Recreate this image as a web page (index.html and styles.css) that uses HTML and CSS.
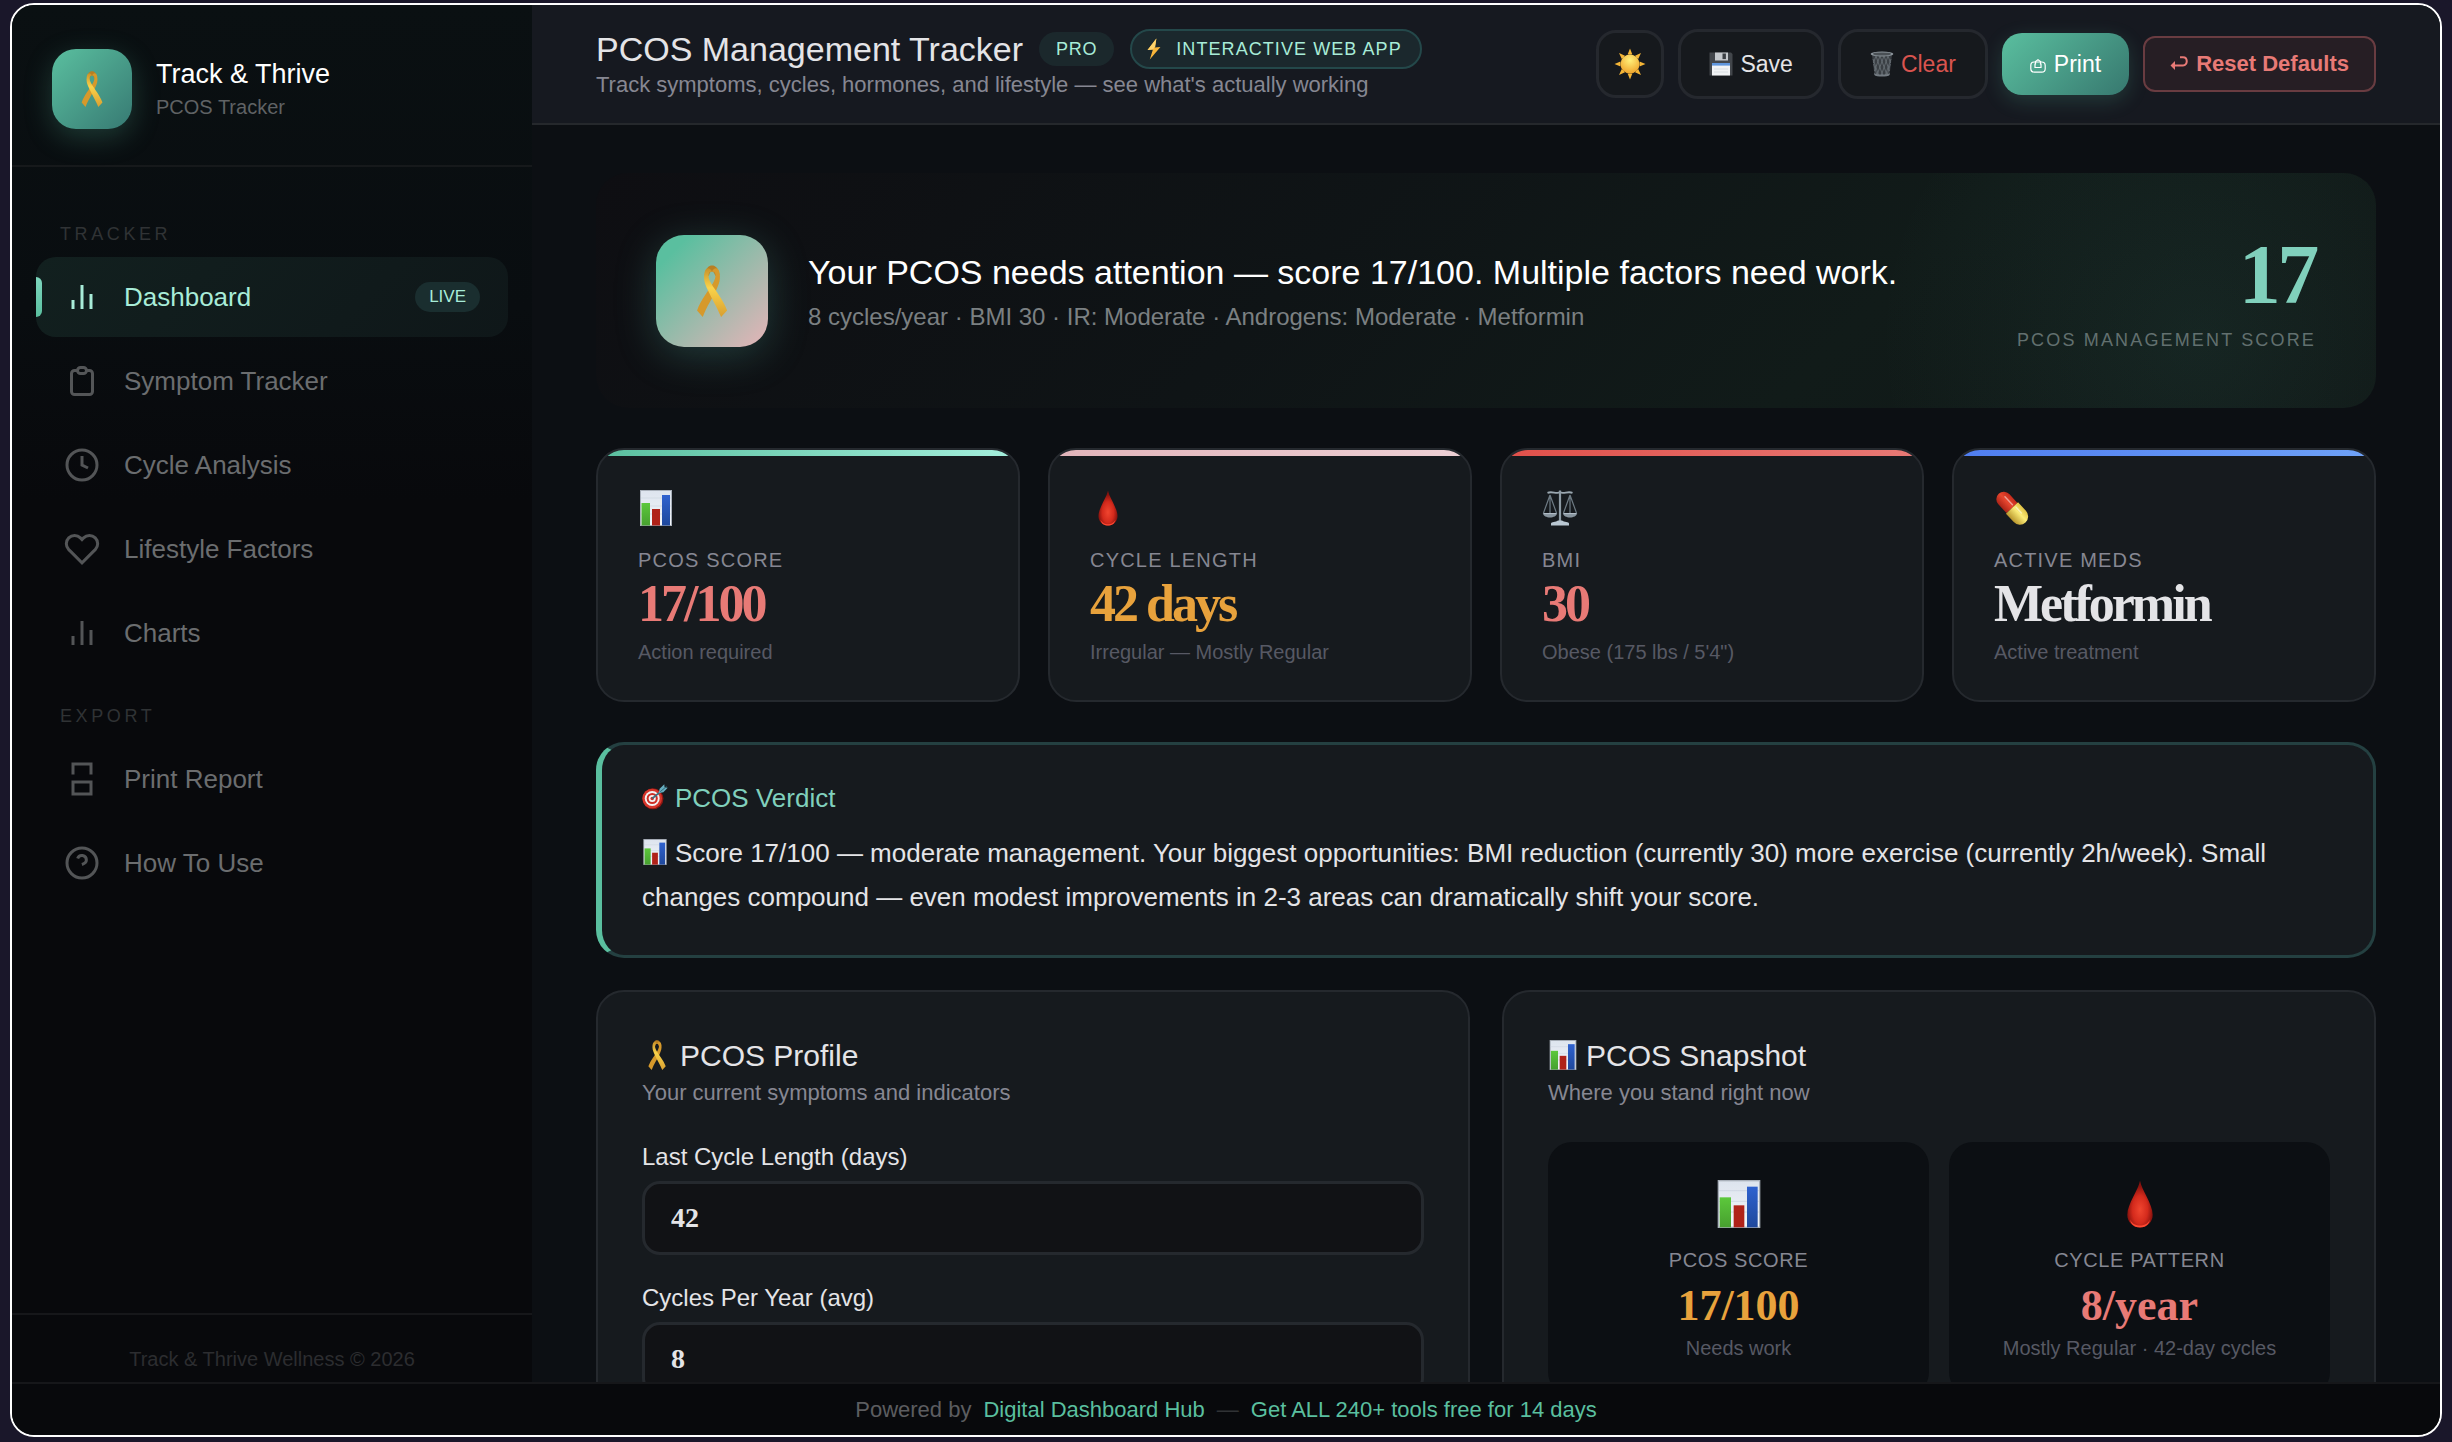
FILE: index.html
```html
<!DOCTYPE html>
<html lang="en">
<head>
  <meta charset="UTF-8" />
  <meta name="viewport" content="width=device-width, initial-scale=1.0" />
  <title>PCOS Management Tracker</title>
  <link rel="stylesheet" href="styles.css">
</head>
<body>

<!-- Shared picture icons -->
<svg class="sprite" aria-hidden="true">
  <defs>
    <linearGradient id="gold" x1="0" y1="0" x2="0" y2="1">
      <stop offset="0" stop-color="#c8922a" />
      <stop offset="0.4" stop-color="#fad34a" />
      <stop offset="1" stop-color="#d89f30" />
    </linearGradient>
    <linearGradient id="paper" x1="0" y1="0" x2="0" y2="1">
      <stop offset="0" stop-color="#dde4ee" />
      <stop offset="1" stop-color="#f2f5f9" />
    </linearGradient>
    <linearGradient id="green" x1="0" y1="0" x2="0" y2="1">
      <stop offset="0" stop-color="#5cc83c" />
      <stop offset="1" stop-color="#47a02f" />
    </linearGradient>
    <linearGradient id="blue" x1="0" y1="0" x2="0" y2="1">
      <stop offset="0" stop-color="#2f62cf" />
      <stop offset="1" stop-color="#1f489c" />
    </linearGradient>
    <radialGradient id="blood" cx="0.5" cy="0.62" r="0.5">
      <stop offset="0" stop-color="#f0452f" />
      <stop offset="0.6" stop-color="#d42a1c" />
      <stop offset="1" stop-color="#8a130e" />
    </radialGradient>
    <radialGradient id="sunfill" cx="0.5" cy="0.3" r="0.7">
      <stop offset="0" stop-color="#fff07a" />
      <stop offset="1" stop-color="#f0a52c" />
    </radialGradient>
    <linearGradient id="steel" x1="0" y1="0" x2="0" y2="1">
      <stop offset="0" stop-color="#5d6a72" />
      <stop offset="0.6" stop-color="#8d9ba5" />
      <stop offset="1" stop-color="#c3d0da" />
    </linearGradient>
    <linearGradient id="pillred" x1="0" y1="0" x2="1" y2="0">
      <stop offset="0" stop-color="#a92317" />
      <stop offset="0.55" stop-color="#e8472f" />
      <stop offset="1" stop-color="#c52c1c" />
    </linearGradient>
    <linearGradient id="pillyellow" x1="0" y1="0" x2="1" y2="0">
      <stop offset="0" stop-color="#b9962c" />
      <stop offset="0.6" stop-color="#fbec78" />
      <stop offset="1" stop-color="#e0c245" />
    </linearGradient>

    <symbol id="i-ribbon" viewBox="0 0 20 32">
      <path d="M5.5 6 C6.5 1.5 8 0.3 10 0.3 C12.2 0.3 13.8 1.8 14.6 6 L12 6.6 C11.4 4.6 10.8 4 10 4 C9 4 8.5 4.6 8.1 6.6 Z" fill="#b97f22" />
      <path d="M14.6 4.6 C15.4 8.6 14.4 11.6 12.6 15.4 C10 21 7 25 4.3 32 L0.8 28 C3.4 21 7.6 16.4 10.4 11.6 C11.8 9.2 12.4 7.4 12 5.4 C11.7 4.4 11 4 10 4 C11.6 1.2 13.8 1.4 14.6 4.6 Z" fill="#d6992b" />
      <path d="M5.4 4.6 C4.6 8.6 5.6 11.6 7.4 15.4 C10 21 12.6 25 15.6 32 L19.3 28 C16.6 21 12.4 16.4 9.6 11.6 C8.2 9.2 7.6 7.4 8 5.4 C8.3 4.4 9 4 10 4 C8.4 1.2 6.2 1.4 5.4 4.6 Z" fill="url(#gold)" />
    </symbol>

    <symbol id="i-chart" viewBox="0 0 32 36">
      <rect x="0.5" y="0.5" width="31" height="35" fill="url(#paper)" stroke="#a9b0ba" />
      <path d="M1 8h30M1 16h30M1 24h30" stroke="#cbd3df" stroke-width="0.6" />
      <rect x="1.5" y="13" width="8.5" height="22.5" fill="url(#green)" />
      <rect x="12" y="19" width="8" height="16.5" fill="#b02219" />
      <rect x="22" y="5" width="8" height="30.5" fill="url(#blue)" />
    </symbol>

    <symbol id="i-drop" viewBox="0 0 22 36">
      <path d="M11 0.5 C12 7 20.5 18 20.5 26 C20.5 31.5 16.4 35.5 11 35.5 C5.6 35.5 1.5 31.5 1.5 26 C1.5 18 10 7 11 0.5 Z" fill="url(#blood)" />
      <path d="M3.4 29.5 C5.2 33.2 8 34.2 11 34.2 C14 34.2 16.8 33.2 18.6 29.5 C17.6 34 14.8 35.6 11 35.6 C7.2 35.6 4.4 34 3.4 29.5 Z" fill="#ff4a33" />
    </symbol>

    <symbol id="i-scales" viewBox="0 0 36 36">
      <g fill="none" stroke="url(#steel)" stroke-width="1.2">
        <path d="M8 5 L1.5 23 M8 5 L8 23 M8 5 L14.5 23 M28 5 L21.5 23 M28 5 L28 23 M28 5 L34.5 23" stroke="#6d7a83" />
        <path d="M5.5 2.8 C10 1 14 4 18 2.4 C22 4 26 1 30.5 2.8" stroke="#9aa7b0" stroke-width="1.8" />
      </g>
      <rect x="16.9" y="0.5" width="2.2" height="31" fill="#8e9ba5" />
      <path d="M0.8 23 H15.2 C14.4 29 1.6 29 0.8 23 Z M20.8 23 H35.2 C34.4 29 21.6 29 20.8 23 Z" fill="#87949e" />
      <path d="M2 23.6 H14 M22 23.6 H34" stroke="#c2ccd4" stroke-width="0.8" />
      <path d="M9 35.5 V33.5 C9 32 14 32 16 30.5 H20 C22 32 27 32 27 33.5 V35.5 Z" fill="#b9c7d2" />
    </symbol>

    <symbol id="i-pill" viewBox="0 0 36 36">
      <g transform="rotate(-43 18 18)">
        <path d="M10.5 18 V6 A7.5 7.5 0 0 1 25.5 6 V18 Z" fill="url(#pillred)" />
        <path d="M9.7 18 H26.3 V29.5 A8.3 8.3 0 0 1 9.7 29.5 Z" fill="url(#pillyellow)" />
        <path d="M20.5 5 V16 M21.5 20 V28" stroke="#fff" stroke-width="1.4" stroke-linecap="round" opacity="0.5" />
      </g>
    </symbol>

    <symbol id="i-target" viewBox="0 0 28 28">
      <circle cx="11.8" cy="16" r="11.3" fill="#8e1712" />
      <circle cx="11" cy="15.6" r="10.6" fill="#d6362b" />
      <circle cx="11" cy="15.6" r="8" fill="#f3f3f3" />
      <circle cx="11" cy="15.6" r="6" fill="#cf2f26" />
      <circle cx="11" cy="15.6" r="3.8" fill="#f3f3f3" />
      <circle cx="11" cy="15.6" r="1.9" fill="#cf2f26" />
      <path d="M11 15.6 L22 6.5" stroke="#3d6f80" stroke-width="1.8" />
      <path d="M18 9.8 L19 5 L24 0.4 L24.3 3.6 L27.7 4 L23 8.8 Z" fill="#66aec0" />
      <path d="M19.6 8.3 L26.5 2.6" stroke="#2f6475" stroke-width="1" />
    </symbol>

    <symbol id="i-bolt" viewBox="0 0 20 24">
      <path d="M12.6 0.5 L3 13.2 L8.8 12.6 L5.4 23.5 L17 9.8 L10.8 10.4 Z" fill="#f7b53a" />
      <path d="M12.6 0.5 L3 13.2 L8.8 12.6 L11.4 9 Z" fill="#ffd36b" />
    </symbol>

    <symbol id="i-sun" viewBox="0 0 32 32">
      <path d="M16 0.5 L18.4 6.5 H13.6 Z M16 31.5 L13.6 25.5 H18.4 Z M0.5 16 L6.5 13.6 V18.4 Z M31.5 16 L25.5 18.4 V13.6 Z M5 5 L11 7.8 L7.8 11 Z M27 5 L24.2 11 L21 7.8 Z M5 27 L7.8 21 L11 24.2 Z M27 27 L21 24.2 L24.2 21 Z" fill="#f5b536" />
      <circle cx="16" cy="16" r="9.5" fill="url(#sunfill)" />
    </symbol>

    <symbol id="i-floppy" viewBox="0 0 24 24">
      <path d="M0.5 0.5 H22 L23.5 2 V23.5 H0.5 Z" fill="#42464b" />
      <rect x="6" y="0.5" width="13" height="8" fill="#c4c8cc" />
      <rect x="13.5" y="1.5" width="3.4" height="5.6" fill="#3a3e43" />
      <rect x="3" y="11" width="18" height="12.5" fill="#f1f3f5" />
      <rect x="3" y="11" width="18" height="2.6" fill="#5f96dd" />
      <path d="M5 17h14M5 20h14" stroke="#d3d7dc" stroke-width="0.8" />
    </symbol>

    <symbol id="i-trash" viewBox="0 0 24 26">
      <path d="M2 4 H22 L19.6 23.4 C19.4 25.6 4.6 25.6 4.4 23.4 Z" fill="#3a3f44" />
      <path d="M3 8 L9 25 M3.6 13 L7 24 M6 5 L13 25 M10 5 L17 24 M14 5 L19.6 20 M18 5 L20.6 12 M21 8 L15 25 M20.4 13 L17 24 M18 5 L11 25 M14 5 L7 24 M10 5 L4.4 20 M6 5 L3.4 12" stroke="#7b8389" stroke-width="0.6" />
      <ellipse cx="12" cy="3" rx="11.4" ry="2.6" fill="#8c959c" />
      <ellipse cx="12" cy="3" rx="9.2" ry="1.6" fill="#4a5055" />
      <path d="M4.2 22 C6 24 18 24 19.8 22 L19.6 24 C18 26 6 26 4.4 24 Z" fill="#737b82" />
    </symbol>
  </defs>
</svg>

<div class="app">
  <div class="layout">

    <aside class="sidebar">
      <div class="brand">
        <div class="brand-icon"><svg class="brand-ribbon"><use href="#i-ribbon" /></svg></div>
        <div>
          <div class="brand-name">Track &amp; Thrive</div>
          <div class="brand-sub">PCOS Tracker</div>
        </div>
      </div>

      <nav class="nav">
        <div class="nav-label">TRACKER</div>
        <a href="#dashboard" class="nav-item active">
          <svg viewBox="0 0 24 24"><path d="M18 20V10M12 20V4M6 20v-6" /></svg>
          <span>Dashboard</span>
          <span class="live">LIVE</span>
        </a>
        <a href="#symptoms" class="nav-item">
          <svg viewBox="0 0 24 24"><path d="M9 5H7a2 2 0 0 0-2 2v12a2 2 0 0 0 2 2h10a2 2 0 0 0 2-2V7a2 2 0 0 0-2-2h-2M9 5a2 2 0 0 0 2 2h2a2 2 0 0 0 2-2M9 5a2 2 0 0 1 2-2h2a2 2 0 0 1 2 2" /></svg>
          <span>Symptom Tracker</span>
        </a>
        <a href="#cycle" class="nav-item">
          <svg viewBox="0 0 24 24"><circle cx="12" cy="12" r="10" /><path d="M12 6v6l4 2" /></svg>
          <span>Cycle Analysis</span>
        </a>
        <a href="#lifestyle" class="nav-item">
          <svg viewBox="0 0 24 24"><path d="M20.84 4.61a5.5 5.5 0 0 0-7.78 0L12 5.67l-1.06-1.06a5.5 5.5 0 0 0-7.78 7.78l1.06 1.06L12 21.23l7.78-7.78 1.06-1.06a5.5 5.5 0 0 0 0-7.78z" /></svg>
          <span>Lifestyle Factors</span>
        </a>
        <a href="#charts" class="nav-item">
          <svg viewBox="0 0 24 24"><path d="M18 20V10M12 20V4M6 20v-6" /></svg>
          <span>Charts</span>
        </a>

        <div class="nav-label">EXPORT</div>
        <a href="#print" class="nav-item">
          <svg viewBox="0 0 24 24"><path d="M6 9V2h12v7" /><rect x="6" y="14" width="12" height="8" /></svg>
          <span>Print Report</span>
        </a>
        <a href="#help" class="nav-item">
          <svg viewBox="0 0 24 24"><circle cx="12" cy="12" r="10" /><path d="M9.09 9a3 3 0 0 1 5.83 1c0 2-3 3-3 3" /></svg>
          <span>How To Use</span>
        </a>
      </nav>

      <div class="sidebar-footer">Track &amp; Thrive Wellness © 2026</div>
    </aside>

    <div class="main">
      <header class="topbar">
        <div>
          <div class="title-row">
            <h1>PCOS Management Tracker</h1>
            <span class="pro">PRO</span>
            <span class="webapp"><svg class="bolt"><use href="#i-bolt" /></svg>INTERACTIVE WEB APP</span>
          </div>
          <p class="subtitle">Track symptoms, cycles, hormones, and lifestyle — see what's actually working</p>
        </div>
        <div class="actions">
          <button class="btn btn-theme" aria-label="Toggle theme"><svg><use href="#i-sun" /></svg></button>
          <button class="btn"><svg class="btn-emoji"><use href="#i-floppy" /></svg>Save</button>
          <button class="btn btn-clear"><svg class="btn-emoji"><use href="#i-trash" /></svg>Clear</button>
          <button class="btn btn-print">
            <svg class="print-glyph" viewBox="0 0 16 14"><rect x="0.8" y="3" width="14.4" height="10.2" rx="3.5" /><path d="M5.5 5.5v-3L8 0.8l2.5 1.7v3M5 4.5v4h6v-4" /></svg>
            Print
          </button>
          <button class="btn btn-reset">
            <svg class="reset-glyph" viewBox="0 0 18 16"><path d="M10 1.2h3c5 0 5 8.3 0 8.3H5" /><path class="head" d="M0.5 9.5l4.5-4.5v9z" /></svg>
            Reset Defaults
          </button>
        </div>
      </header>

      <main class="content">
        <section class="hero">
          <div class="hero-icon"><svg class="hero-ribbon"><use href="#i-ribbon" /></svg></div>
          <div class="hero-text">
            <h2>Your PCOS needs attention — score 17/100. Multiple factors need work.</h2>
            <p>8 cycles/year · BMI 30 · IR: Moderate · Androgens: Moderate · Metformin</p>
          </div>
          <div class="hero-score">
            <div class="score-num">17</div>
            <div class="score-label">PCOS MANAGEMENT SCORE</div>
          </div>
        </section>

        <section class="stats">
          <div class="stat stat-green">
            <svg class="stat-icon"><use href="#i-chart" /></svg>
            <div class="stat-label">PCOS SCORE</div>
            <div class="stat-value red">17/100</div>
            <div class="stat-sub">Action required</div>
          </div>
          <div class="stat stat-pink">
            <svg class="stat-icon"><use href="#i-drop" /></svg>
            <div class="stat-label">CYCLE LENGTH</div>
            <div class="stat-value amber">42 days</div>
            <div class="stat-sub">Irregular — Mostly Regular</div>
          </div>
          <div class="stat stat-red">
            <svg class="stat-icon"><use href="#i-scales" /></svg>
            <div class="stat-label">BMI</div>
            <div class="stat-value red">30</div>
            <div class="stat-sub">Obese (175 lbs / 5'4")</div>
          </div>
          <div class="stat stat-blue">
            <svg class="stat-icon"><use href="#i-pill" /></svg>
            <div class="stat-label">ACTIVE MEDS</div>
            <div class="stat-value">Metformin</div>
            <div class="stat-sub">Active treatment</div>
          </div>
        </section>

        <section class="verdict">
          <h3><svg class="text-emoji"><use href="#i-target" /></svg>PCOS Verdict</h3>
          <p><svg class="text-emoji"><use href="#i-chart" /></svg>Score 17/100 — moderate management. Your biggest opportunities: BMI reduction (currently 30) more exercise (currently 2h/week). Small changes compound — even modest improvements in 2-3 areas can dramatically shift your score.</p>
        </section>

        <section class="panels">
          <div class="panel">
            <h3><svg class="panel-emoji"><use href="#i-ribbon" /></svg>PCOS Profile</h3>
            <p class="panel-sub">Your current symptoms and indicators</p>
            <div class="field">
              <label for="cycle-length">Last Cycle Length (days)</label>
              <input type="text" inputmode="numeric" id="cycle-length" value="42" />
            </div>
            <div class="field">
              <label for="cycles-year">Cycles Per Year (avg)</label>
              <input type="text" inputmode="numeric" id="cycles-year" value="8" />
            </div>
          </div>

          <div class="panel">
            <h3><svg class="panel-emoji"><use href="#i-chart" /></svg>PCOS Snapshot</h3>
            <p class="panel-sub">Where you stand right now</p>
            <div class="snapshot">
              <div class="snap">
                <svg class="snap-icon"><use href="#i-chart" /></svg>
                <div class="snap-label">PCOS SCORE</div>
                <div class="snap-value amber">17/100</div>
                <div class="snap-sub">Needs work</div>
              </div>
              <div class="snap">
                <svg class="snap-icon"><use href="#i-drop" /></svg>
                <div class="snap-label">CYCLE PATTERN</div>
                <div class="snap-value red">8/year</div>
                <div class="snap-sub">Mostly Regular · 42-day cycles</div>
              </div>
            </div>
          </div>
        </section>
      </main>
    </div>
  </div>

  <footer class="powered">
    <span>Powered by</span>
    <a href="#hub">Digital Dashboard Hub</a>
    <span class="dash">—</span>
    <a href="#trial">Get ALL 240+ tools free for 14 days</a>
  </footer>
</div>

</body>
</html>
```

FILE: styles.css
```css
* {
  box-sizing: border-box;
  margin: 0;
  padding: 0;
}
body {
  height: 100vh;
  padding: 3px 10px 5px;
  background: #1a172a;
  color: #e4e4e7;
  font-family: "Liberation Sans", Arial, sans-serif;
  font-size: 22px;
}
h1, h2, h3 {
  font-weight: 400;
}
a {
  text-decoration: none;
}
.sprite {
  position: absolute;
  width: 0;
  height: 0;
}
.app {
  height: 100%;
  display: flex;
  flex-direction: column;
  border: 2px solid #fff;
  border-radius: 24px;
  overflow: hidden;
  background: #0c0f13;
}
.layout {
  flex: 1;
  min-height: 0;
  display: flex;
}

/* Sidebar */
.sidebar {
  width: 520px;
  flex-shrink: 0;
  display: flex;
  flex-direction: column;
  background: linear-gradient(180deg, #0a1012 0%, #090d10 22%, #08090c 36%);
}
.brand {
  display: flex;
  align-items: center;
  gap: 24px;
  padding: 44px 40px 36px;
  border-bottom: 2px solid #16191b;
}
.brand-icon {
  width: 80px;
  height: 80px;
  display: flex;
  align-items: center;
  justify-content: center;
  border-radius: 24px;
  background: linear-gradient(135deg, #5abf9f, #377a73);
  box-shadow: 0 8px 28px rgba(90, 191, 159, 0.25);
}
.brand-ribbon {
  width: 24px;
  height: 36px;
}
.brand-name {
  font-size: 27px;
  line-height: 36px;
  color: #fff;
}
.brand-sub {
  font-size: 20px;
  line-height: 30px;
  color: #5f6264;
}
.nav {
  flex: 1;
  padding: 24px;
}
.nav-label {
  padding: 31px 24px 11px;
  font-size: 18px;
  line-height: 24px;
  letter-spacing: 0.2em;
  color: #303335;
}
.nav-item {
  position: relative;
  height: 80px;
  display: flex;
  align-items: center;
  gap: 24px;
  padding: 0 28px;
  border-radius: 20px;
  font-size: 26px;
  color: #6b6d6f;
}
.nav-item + .nav-item {
  margin-top: 4px;
}
.nav-item svg {
  width: 36px;
  height: 36px;
  fill: none;
  stroke: #535557;
  stroke-width: 2;
}
.nav-item.active {
  background: linear-gradient(135deg, #12201f, #0f1719);
  color: #a8ecd8;
}
.nav-item.active svg {
  stroke: #a8ecd8;
}
.nav-item.active::before {
  content: "";
  position: absolute;
  left: 0;
  top: 20px;
  width: 6px;
  height: 40px;
  border-radius: 0 6px 6px 0;
  background: linear-gradient(180deg, #7ed6be, #5abf9f);
}
.live {
  margin-left: auto;
  padding: 0 14px;
  border-radius: 15px;
  background: #1a2e2f;
  font-size: 17px;
  line-height: 30px;
}
.sidebar-footer {
  padding: 30px 24px 9px;
  border-top: 2px solid #16171a;
  font-size: 20px;
  line-height: 28px;
  text-align: center;
  color: #2c2d30;
}

/* Top bar */
.main {
  flex: 1;
  min-width: 0;
  display: flex;
  flex-direction: column;
}
.topbar {
  display: flex;
  align-items: center;
  justify-content: space-between;
  padding: 24px 64px;
  border-bottom: 2px solid #25282c;
  background: #161920;
}
.title-row {
  display: flex;
  align-items: center;
  gap: 16px;
  height: 40px;
}
h1 {
  font-size: 34px;
  line-height: 40px;
}
.pro {
  padding: 0 17px;
  border-radius: 17px;
  background: #1b282c;
  color: #a8ecd8;
  font-size: 18px;
  line-height: 34px;
  letter-spacing: 0.04em;
}
.webapp {
  height: 40px;
  display: flex;
  align-items: center;
  gap: 12px;
  padding: 0 18px 0 12px;
  border: 2px solid #24484a;
  border-radius: 20px;
  background: #1b282d;
  color: #a8ecd8;
  font-size: 18px;
  letter-spacing: 0.06em;
}
.bolt {
  width: 20px;
  height: 22px;
}
.subtitle {
  margin-top: 2px;
  line-height: 28px;
  color: #868792;
}
.actions {
  display: flex;
  align-items: center;
  gap: 14px;
}
.btn {
  height: 70px;
  display: flex;
  align-items: center;
  gap: 7px;
  padding: 0 28px;
  border: 3px solid #25282e;
  border-radius: 20px;
  background: #16191d;
  color: #e4e4e7;
  font-family: inherit;
  font-size: 23px;
  cursor: pointer;
}
.btn-emoji {
  width: 24px;
  height: 26px;
}
.btn-theme {
  width: 68px;
  height: 68px;
  justify-content: center;
  padding: 0;
}
.btn-theme svg {
  width: 32px;
  height: 32px;
}
.btn-clear {
  padding: 0 29px;
  color: #d9544f;
}
.btn-print {
  height: 62px;
  gap: 8px;
  border: none;
  background: linear-gradient(135deg, #5abf9f, #37786f);
  box-shadow: 0 6px 20px rgba(90, 191, 159, 0.2);
  color: #fff;
}
.print-glyph {
  width: 16px;
  height: 14px;
  margin-top: 4px;
  fill: none;
  stroke: #fff;
  stroke-width: 1.2;
}
.btn-reset {
  height: 56px;
  gap: 8px;
  padding: 0 25px;
  border: 2px solid #693c41;
  border-radius: 12px;
  background: #261e24;
  color: #e87a76;
  font-size: 22px;
  font-weight: 700;
}
.reset-glyph {
  width: 18px;
  height: 16px;
  fill: none;
  stroke: #e87a76;
  stroke-width: 2;
}
.reset-glyph .head {
  fill: #e87a76;
  stroke: none;
}

/* Content */
.content {
  flex: 1;
  min-height: 0;
  overflow: hidden;
  padding: 48px 64px;
}
.hero {
  display: flex;
  align-items: center;
  gap: 40px;
  padding: 40px 60px;
  min-height: 235px;
  border-radius: 32px;
  background:
    radial-gradient(circle at 90% 70%, rgba(90, 191, 170, 0.08), transparent 320px),
    linear-gradient(135deg, #0e0e12 0%, #0f1416 40%, #111b19 70%, #101716 100%);
}
.hero-icon {
  width: 112px;
  height: 112px;
  display: flex;
  align-items: center;
  justify-content: center;
  border-radius: 28px;
  background: linear-gradient(135deg, #5abf9f 15%, #e6b4b8);
  box-shadow: 0 8px 40px rgba(90, 191, 175, 0.25);
}
.hero-ribbon {
  width: 36px;
  height: 52px;
}
.hero-text {
  flex: 1;
}
.hero-text h2 {
  font-size: 34px;
  line-height: 44px;
  color: #fff;
}
.hero-text p {
  margin-top: 8px;
  font-size: 24px;
  line-height: 30px;
  color: #7b8082;
}
.hero-score {
  text-align: right;
}
.score-num {
  font-family: "Liberation Serif", "Times New Roman", serif;
  font-size: 84px;
  font-weight: 700;
  line-height: 90px;
  letter-spacing: -0.04em;
  color: #80d0bc;
}
.score-label {
  margin-top: 8px;
  font-size: 18px;
  line-height: 24px;
  letter-spacing: 0.12em;
  color: #62706f;
}
.stats {
  display: grid;
  grid-template-columns: repeat(4, 1fr);
  gap: 28px;
  margin-top: 40px;
}
.stat {
  position: relative;
  overflow: hidden;
  padding: 38px 40px 36px;
  border: 2px solid #25292e;
  border-radius: 28px;
  background: #161a1e;
}
.stat::before {
  content: "";
  position: absolute;
  top: 0;
  left: 0;
  right: 0;
  height: 6px;
}
.stat-green::before {
  background: linear-gradient(90deg, #5abf9f, #a5efdd);
}
.stat-pink::before {
  background: linear-gradient(90deg, #e2b4ba, #edd0d5);
}
.stat-red::before {
  background: linear-gradient(90deg, #e0504a, #e87a76);
}
.stat-blue::before {
  background: linear-gradient(90deg, #4f7df0, #6fa2f7);
}
.stat-icon {
  display: block;
  width: 36px;
  height: 36px;
  margin: 2px 0 22px;
}
.stat-label {
  font-size: 20px;
  line-height: 24px;
  letter-spacing: 0.06em;
  color: #868792;
}
.stat-value {
  margin-top: 4px;
  font-family: "Liberation Serif", "Times New Roman", serif;
  font-size: 52px;
  font-weight: 700;
  line-height: 56px;
  letter-spacing: -3px;
}
.stat-sub {
  margin-top: 8px;
  font-size: 20px;
  line-height: 24px;
  color: #575964;
}
.red {
  color: #e87a76;
}
.amber {
  color: #e8a23c;
}
.verdict {
  margin-top: 40px;
  padding: 36px 40px;
  border: 3px solid #244041;
  border-left: 6px solid #5abf9f;
  border-radius: 28px;
  background: #161a1e;
}
.verdict h3 {
  font-size: 26px;
  line-height: 34px;
  color: #80d0bc;
}
.verdict p {
  margin-top: 16px;
  font-size: 26px;
  line-height: 44px;
}
.text-emoji {
  width: 26px;
  height: 26px;
  margin-right: 7px;
  vertical-align: -3px;
}
.panels {
  display: grid;
  grid-template-columns: 1fr 1fr;
  gap: 32px;
  margin-top: 32px;
}
.panel {
  padding: 44px;
  border: 2px solid #25292e;
  border-radius: 28px;
  background: #161a1e;
}
.panel h3 {
  font-size: 30px;
  line-height: 40px;
}
.panel-emoji {
  width: 30px;
  height: 30px;
  margin-right: 8px;
  vertical-align: -4px;
}
.panel-sub {
  margin: 4px 0 36px;
  line-height: 26px;
  color: #868792;
}
.field + .field {
  margin-top: 28px;
}
.field label {
  display: block;
  margin-bottom: 10px;
  font-size: 24px;
  line-height: 29px;
}
.field input {
  width: 100%;
  height: 74px;
  padding: 0 26px;
  border: 3px solid #25292e;
  border-radius: 18px;
  background: #111215;
  color: #e4e4e7;
  font-family: "Liberation Serif", "Times New Roman", serif;
  font-size: 28px;
  font-weight: 700;
}
.snapshot {
  display: grid;
  grid-template-columns: 1fr 1fr;
  gap: 20px;
}
.snap {
  padding: 36px 20px;
  border-radius: 24px;
  background: #0c0f13;
  text-align: center;
}
.snap-icon {
  display: block;
  width: 48px;
  height: 48px;
  margin: 2px auto 20px;
}
.snap-label {
  font-size: 20px;
  line-height: 24px;
  letter-spacing: 0.03em;
  color: #868792;
}
.snap-value {
  margin-top: 8px;
  font-family: "Liberation Serif", "Times New Roman", serif;
  font-size: 44px;
  font-weight: 700;
  line-height: 52px;
}
.snap-sub {
  margin-top: 4px;
  font-size: 20px;
  line-height: 24px;
  color: #575964;
}

/* Bottom bar */
.powered {
  height: 53px;
  flex-shrink: 0;
  display: flex;
  align-items: center;
  justify-content: center;
  gap: 12px;
  border-top: 2px solid #16171a;
  background: #08090c;
  color: #5c5d60;
}
.powered a {
  color: #5abf9f;
}
.powered .dash {
  color: #303235;
}
```
